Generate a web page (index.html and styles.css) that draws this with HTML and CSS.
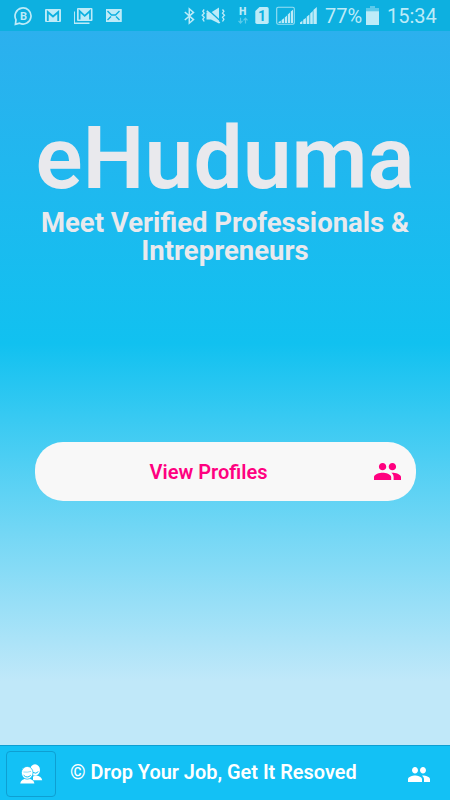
FILE: index.html
```html
<!DOCTYPE html>
<html lang="en">
<head>
    <meta charset="utf-8">
    <meta name="viewport" content="width=device-width, initial-scale=1">
    <title>eHuduma</title>
    <link rel="stylesheet" href="styles.css">
</head>
<body>
    <div class="status-bar">
        <div class="notifications">
            <svg class="icon" width="19" height="20" viewBox="0 0 19 20">
                <path d="M1.4 18.4L2 13.8A8 8 0 1 1 5.6 17.2Z" fill="none" stroke="currentColor" stroke-width="1.7"/>
                <text x="9.4" y="13.6" class="glyph" font-size="11">B</text>
            </svg>
            <svg class="icon" width="17" height="20" viewBox="0 0 17 20">
                <rect x="0" y="3" width="16" height="13" rx="1"/>
                <path class="cut" d="M2.8 15V6L8 10.5L13.2 6V15"/>
            </svg>
            <svg class="icon" width="20" height="20" viewBox="0 0 20 20">
                <path d="M0.2 5.5V17.3H15.5" fill="none" stroke="currentColor" stroke-width="1.5"/>
                <rect x="3" y="2" width="15.5" height="13" rx="1"/>
                <path class="cut" d="M5.6 13.5V5L10.7 9.8L16 5V13.5"/>
            </svg>
            <svg class="icon" width="16" height="20" viewBox="1 0 16 20">
                <rect x="0" y="3" width="16.8" height="13" rx="0.6"/>
                <path class="cut thin" d="M2.5 5L6.5 9H10.5L14.5 5M2.5 14L6 10.5M14.5 14L11 10.5"/>
            </svg>
        </div>
        <div class="system">
            <svg class="icon bluetooth" width="11" height="20" viewBox="0 0 11 20">
                <path d="M0.8 6L9.5 13.6L5.3 17.2V2.8L9.5 6.4L0.8 14" fill="none" stroke="currentColor" stroke-width="1.5"/>
            </svg>
            <svg class="icon mute" width="25" height="20" viewBox="0 0 25 20">
                <path d="M5.5 6.5H10L18 1.5V17.5L10 13.5H5.5Z"/>
                <path class="cut thin" d="M7.2 3.8L20.2 15.8"/>
                <path d="M5.8 4.8L18.8 17" fill="none" stroke="currentColor" stroke-width="1.6"/>
                <path d="M3.2 3.5L1.8 5.3L3.2 7.2L1.2 9.2L3.2 11.2L1.8 13.2L3.2 15.5M21.5 3.5L22.9 5.3L21.5 7.2L23.5 9.2L21.5 11.2L22.9 13.2L21.5 15.5" fill="none" stroke="currentColor" stroke-width="1.3"/>
            </svg>
            <svg class="icon data" width="10" height="20" viewBox="0 0 10 20">
                <text x="4.8" y="9.4" class="glyph heavy" font-size="10.5">H</text>
                <path class="dim" d="M2.5 11.8V17M0.5 14.8L2.5 17L4.5 14.8M7.5 17.5V12.2M5.5 14.4L7.5 12.2L9.5 14.4"/>
            </svg>
            <svg class="icon sim" width="14" height="20" viewBox="0 0 14 20">
                <path d="M4.5 1H12Q13.7 1 13.7 2.7V16.3Q13.7 18 12 18H2Q0.3 18 0.3 16.3V5Z"/>
                <text x="7" y="14.6" class="glyph cut-text" font-size="14">1</text>
            </svg>
            <svg class="icon signal-box" width="19" height="20" viewBox="0 0 19 20">
                <rect x="0.7" y="1.2" width="17.6" height="17" rx="1.5" fill="none" stroke="currentColor" stroke-width="1.1" opacity="0.8"/>
                <path d="M2.6 17V16L4.8 14.8V17ZM5.6 17V14L8 12.2V17ZM8.8 17V11.4L11 9.6V17ZM11.8 17V8.5L14 6.6V17ZM14.8 17V5.6L17 3.8V17Z"/>
            </svg>
            <svg class="icon signal" width="17" height="20" viewBox="0 0 17 20">
                <path d="M0 18V16.5L2.4 14.8V18ZM3.2 18V13.8L5.9 12V18ZM6.7 18V10.8L9.4 8.6V18ZM10.2 18V7.5L12.8 5V18ZM13.4 18V4L16.8 1V18Z"/>
            </svg>
            <span class="percent">77%</span>
            <svg class="icon battery" width="13" height="20" viewBox="0 0 13 20">
                <path d="M4 0H9V2H13V6H0V2H4Z" opacity="0.45"/>
                <rect x="0" y="5.3" width="13" height="13.7"/>
            </svg>
            <span class="time">15:34</span>
        </div>
    </div>

    <main class="content">
        <h1>eHuduma</h1>
        <h2>Meet Verified Professionals &amp; Intrepreneurs</h2>
        <button class="profiles-btn" type="button">
            <span>View Profiles</span>
            <svg width="27" height="17" viewBox="1 5 22 14" preserveAspectRatio="none" fill="currentColor">
                <path d="M16 11c1.66 0 2.99-1.34 2.99-3S17.66 5 16 5s-3 1.34-3 3 1.34 3 3 3zm-8 0c1.66 0 2.99-1.34 2.99-3S9.66 5 8 5 5 6.34 5 8s1.34 3 3 3zm0 2c-2.33 0-7 1.17-7 3.5V19h14v-2.5c0-2.33-4.67-3.5-7-3.5zm8 0c-.29 0-.62.02-.97.05 1.16.84 1.97 1.97 1.97 3.45V19h6v-2.5c0-2.33-4.67-3.5-7-3.5z"/>
            </svg>
        </button>
    </main>

    <footer class="footer">
        <button class="users-btn" type="button">
            <svg width="23" height="20" viewBox="0 0 23 20">
                <g fill="#fff">
                    <ellipse cx="15" cy="6" rx="5" ry="5.8"/>
                    <path d="M13 16.3V12.6L16 11.6Q21.5 12.4 22.2 16.3Z"/>
                </g>
                <path d="M13 8.4Q16 10.4 18.4 7.6" class="face"/>
                <g fill="#fff">
                    <path d="M0.2 19.4Q0.8 15 7.2 14.4Q13.8 15 14.4 19.4Z"/>
                    <ellipse cx="7.2" cy="8.8" rx="5.8" ry="6.4" stroke="#13c1f5" stroke-width="0.8"/>
                </g>
                <path d="M3.4 8Q7.6 8.6 11 7.4" class="face soft"/>
                <path d="M3.6 11.2Q7.2 14.8 10.8 11.2" class="face"/>
            </svg>
        </button>
        <span class="footer-text">© Drop Your Job, Get It Resoved</span>
        <svg class="people" width="22" height="15" viewBox="1 5 22 14" preserveAspectRatio="none" fill="currentColor">
            <path d="M16 11c1.66 0 2.99-1.34 2.99-3S17.66 5 16 5s-3 1.34-3 3 1.34 3 3 3zm-8 0c1.66 0 2.99-1.34 2.99-3S9.66 5 8 5 5 6.34 5 8s1.34 3 3 3zm0 2c-2.33 0-7 1.17-7 3.5V19h14v-2.5c0-2.33-4.67-3.5-7-3.5zm8 0c-.29 0-.62.02-.97.05 1.16.84 1.97 1.97 1.97 3.45V19h6v-2.5c0-2.33-4.67-3.5-7-3.5z"/>
        </svg>
    </footer>
</body>
</html>
```
FILE: styles.css
```css
* {
    box-sizing: border-box;
}
body {
    font-family: Roboto, sans-serif;
    margin: 0;
    height: 800px;
    display: flex;
    flex-direction: column;
    overflow: hidden;
}
svg {
    display: block;
    flex: none;
}
.status-bar {
    height: 31px;
    padding: 0 13px 0 14px;
    display: flex;
    justify-content: space-between;
    background: #0db0e0;
    color: #bdebf8;
}
.notifications, .system {
    display: flex;
    align-items: center;
}
.notifications {
    gap: 12px;
}
.icon {
    fill: currentColor;
}
.glyph {
    font-weight: 700;
    text-anchor: middle;
}
.heavy {
    font-weight: 900;
}
.cut {
    fill: none;
    stroke: #0db0e0;
    stroke-width: 1.8;
}
.thin {
    stroke-width: 1.4;
}
.cut-text {
    fill: #0db0e0;
}
.dim {
    fill: none;
    stroke: #5ccbea;
    stroke-width: 1.2;
}
.bluetooth {
    margin-right: 6px;
}
.mute {
    margin-right: 12px;
}
.data {
    margin-right: 7px;
}
.sim {
    margin-right: 7px;
}
.signal-box {
    margin-right: 5px;
}
.percent, .time {
    font-size: 20px;
    line-height: 31px;
    padding-top: 2px;
}
.percent {
    width: 41px;
    margin-left: 8px;
}
.time {
    width: 50px;
    margin-left: 8px;
}
.content {
    flex: 1;
    padding: 0 35px;
    background: linear-gradient(#2cb0ee 0, #11c1f0 312px, #c0e8f9 650px);
}
.content::before {
    content: "";
    display: table;
}
h1 {
    margin: 75px 0 0;
    font-size: 87.5px;
    font-weight: 560;
    line-height: 105px;
    text-align: center;
    color: #e9e9ed;
}
h2 {
    margin: -2px 0 0;
    font-size: 27.5px;
    font-weight: 700;
    line-height: 28px;
    text-align: center;
    color: #e9e9ed;
}
.profiles-btn {
    width: 381px;
    height: 59px;
    margin-top: 177px;
    padding: 0 15px 0 0;
    display: flex;
    align-items: center;
    border: none;
    border-radius: 28px;
    background: #f8f8f8;
    color: #ff0080;
    font-family: inherit;
    font-size: 20px;
    font-weight: 600;
}
.profiles-btn span {
    flex: 1;
    padding-left: 8px;
    text-align: center;
}
.footer {
    height: 55px;
    padding: 0 20px 0 6px;
    display: flex;
    align-items: center;
    border-top: 1px solid #0e9fd2;
    background: #13c1f5;
    color: #fff;
}
.users-btn {
    width: 50px;
    height: 46px;
    margin-top: 2px;
    padding: 0;
    display: flex;
    align-items: center;
    justify-content: center;
    border: 1px solid #0e9fd2;
    border-radius: 4px;
    background: none;
}
.face {
    fill: none;
    stroke: #13c1f5;
    stroke-width: 1;
}
.soft {
    opacity: 0.5;
}
.footer-text {
    flex: 1;
    margin: -2px 0 0 14px;
    font-size: 19.9px;
    font-weight: 600;
    white-space: nowrap;
}
.people {
    margin-top: 3px;
}
```
